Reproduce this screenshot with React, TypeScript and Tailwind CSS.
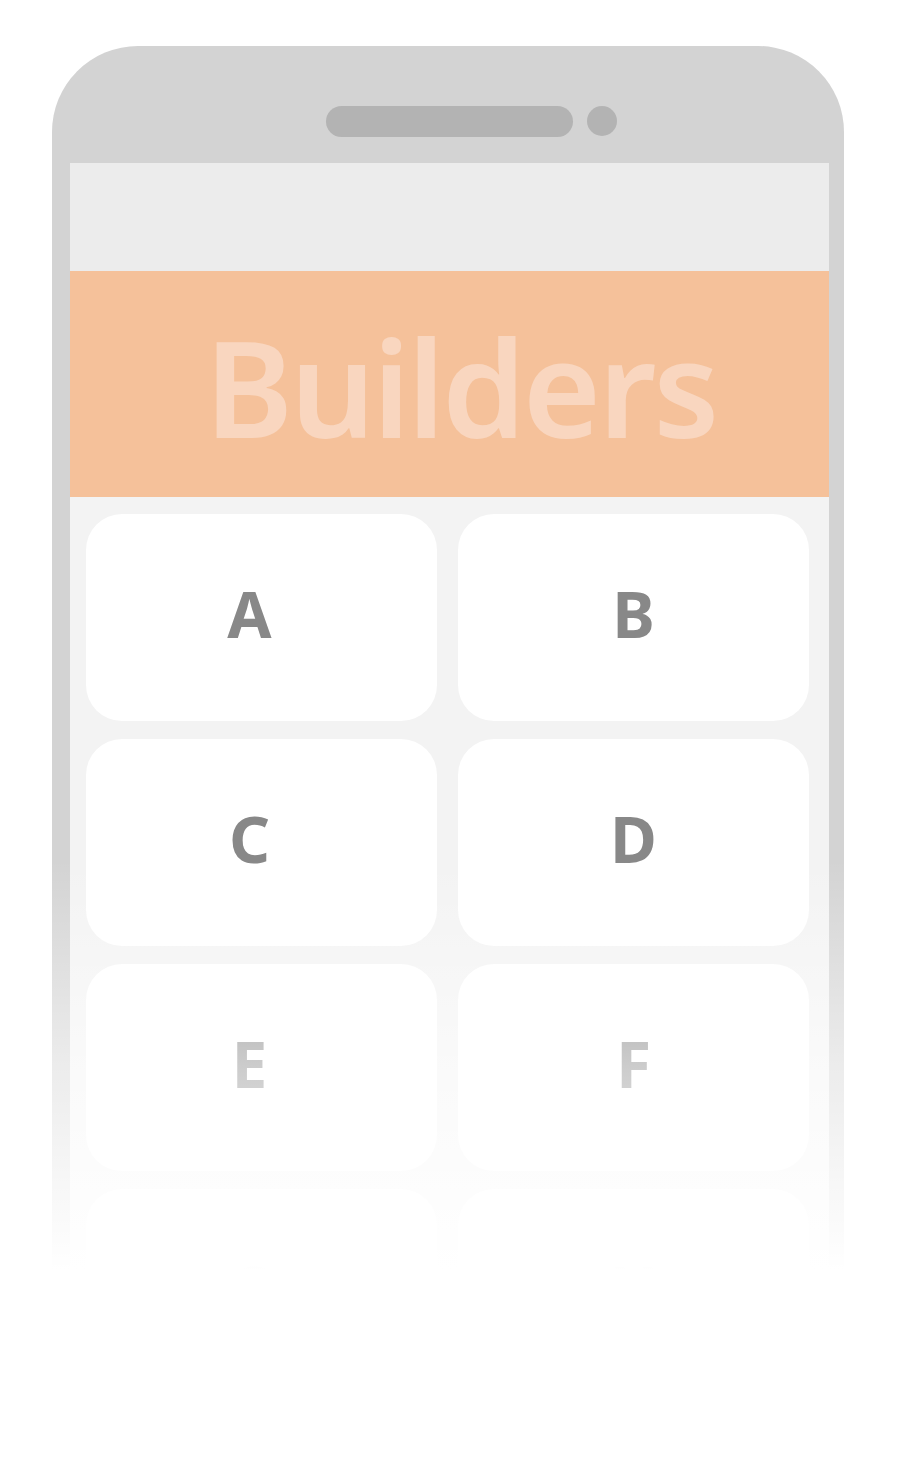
import * as React from "react";

const cards = ["A", "B", "C", "D", "E", "F", "G", "H"];

function Card({ label, left }: { label: string; left: boolean }) {
  return (
    <div
      className={`h-[207px] rounded-[36px] bg-white flex items-center justify-center ${left ? "pr-6" : ""}`}
    >
      <span className="text-[64px] font-bold leading-none text-[#888888] -mt-2">
        {label}
      </span>
    </div>
  );
}

export default function App() {
  return (
    <div
      className="relative h-[1473px] w-[903px] overflow-hidden bg-white"
      style={{ fontFamily: '"Noto Sans", "Open Sans", sans-serif' }}
    >
      <div className="ml-[52px] mt-[46px] w-[792px] rounded-t-[86px] bg-[#d3d3d3] pl-[18px] pr-[15px] pb-[40px]">
        {/* earpiece + camera */}
        <div className="flex h-[117px] items-start justify-center gap-[14px] pt-[60px] pl-[44px]">
          <div className="h-[31px] w-[247px] rounded-full bg-[#b3b3b3]" />
          <div className="h-[30px] w-[30px] rounded-full bg-[#b3b3b3]" />
        </div>

        {/* screen */}
        <div className="bg-[#f3f3f3]">
          <div className="h-[108px] bg-[#ececec]" />
          <div className="flex h-[226px] items-center justify-center bg-[#f5c19a] pl-[22px]">
            <span className="text-[134px] font-semibold leading-none tracking-[-0.023em] text-[#f9d6bf] mt-1">
              Builders
            </span>
          </div>
          <div className="grid grid-cols-2 gap-x-[21px] gap-y-[18px] pl-[16px] pr-[20px] pt-[17px] pb-[20px]">
            {cards.map((c, i) => (
              <Card key={c} label={c} left={i % 2 === 0} />
            ))}
          </div>
        </div>
      </div>

      {/* bottom fade */}
      <div className="pointer-events-none absolute inset-0 bg-[linear-gradient(to_bottom,rgba(255,255,255,0)_860px,rgba(255,255,255,0.58)_1070px,#ffffff_1270px)]" />
    </div>
  );
}
